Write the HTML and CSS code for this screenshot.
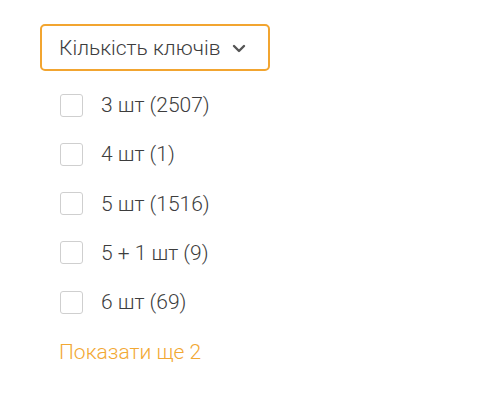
FILE: index.html
```html
<!DOCTYPE html>
<html lang="uk">
<head>
<meta charset="utf-8">
<link rel="stylesheet" href="styles.css">
</head>
<body>
<div class="filter">
  <button class="dropdown">
    <span class="dropdown-title">Кількість ключів</span>
    <svg class="chevron" width="14" height="9" viewBox="0 0 14 9"><path d="M2 2l5 5 5-5" fill="none" stroke="#555" stroke-width="2.4" stroke-linecap="round" stroke-linejoin="round"/></svg>
  </button>
  <ul class="options">
    <li class="option"><span class="box"></span><span class="label">3 шт (2507)</span></li>
    <li class="option"><span class="box"></span><span class="label">4 шт (1)</span></li>
    <li class="option"><span class="box"></span><span class="label">5 шт (1516)</span></li>
    <li class="option"><span class="box"></span><span class="label">5 + 1 шт (9)</span></li>
    <li class="option"><span class="box"></span><span class="label">6 шт (69)</span></li>
  </ul>
  <a class="more">Показати ще 2</a>
</div>
</body>
</html>
```
FILE: styles.css
```css
html, body {
  margin: 0;
  padding: 0;
  background: #fff;
}
body {
  font-family: Roboto, "Liberation Sans", sans-serif;
  font-weight: 300;
  color: #444;
}
.filter {
  padding: 24px 0 0 40px;
  display: flex;
  flex-direction: column;
  align-items: flex-start;
}
.dropdown {
  box-sizing: border-box;
  width: 230px;
  height: 47px;
  border: 2.5px solid #f2a530;
  border-radius: 5px;
  background: #fff;
  display: flex;
  align-items: center;
  justify-content: space-between;
  padding: 0 22px 0 17px;
  font-family: inherit;
  font-weight: 300;
  font-size: 21px;
  color: #3d3d3d;
}
.chevron {
  display: block;
  margin-top: 2px;
}
.options {
  list-style: none;
  margin: 22px 0 0 0;
  padding: 0 0 0 20px;
  display: flex;
  flex-direction: column;
  gap: 25.25px;
}
.option {
  display: flex;
  align-items: center;
  height: 24px;
  line-height: 24px;
  font-size: 21px;
  color: #3d3d3d;
}
.box {
  box-sizing: border-box;
  width: 23px;
  height: 23px;
  border: 1.5px solid #cfcfcf;
  border-radius: 3px;
  margin-right: 18px;
}
.more {
  margin: 26px 0 0 19px;
  line-height: 24px;
  font-size: 21px;
  color: #f2a833;
}
```
